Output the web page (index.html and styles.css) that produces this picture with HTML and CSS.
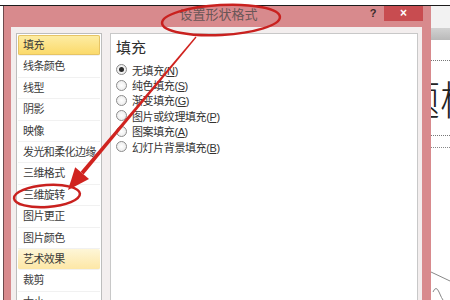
FILE: index.html
```html
<!DOCTYPE html>
<html lang="zh-CN">
<head>
    <meta charset="UTF-8">
    <meta name="viewport" content="width=device-width, initial-scale=1.0">
    <link rel="stylesheet" href="styles.css">
</head>
<body>
    <div class="screen-edge"></div>
    <div class="desk">
        <div class="dialog">
            <div class="titlebar">
                <span class="title">设置形状格式</span>
                <span class="help">?</span>
                <span class="close">×</span>
            </div>
            <div class="dialog-body">
                <ul class="nav">
                    <li class="selected">填充</li>
                    <li>线条颜色</li>
                    <li>线型</li>
                    <li>阴影</li>
                    <li>映像</li>
                    <li>发光和柔化边缘</li>
                    <li>三维格式</li>
                    <li>三维旋转</li>
                    <li>图片更正</li>
                    <li>图片颜色</li>
                    <li class="hover">艺术效果</li>
                    <li>裁剪</li>
                    <li>大小</li>
                </ul>
                <div class="pane">
                    <h2>填充</h2>
                    <label class="option"><span class="radio checked"></span><span>无填充(<u>N</u>)</span></label>
                    <label class="option"><span class="radio"></span><span>纯色填充(<u>S</u>)</span></label>
                    <label class="option"><span class="radio"></span><span>渐变填充(<u>G</u>)</span></label>
                    <label class="option"><span class="radio"></span><span>图片或纹理填充(<u>P</u>)</span></label>
                    <label class="option"><span class="radio"></span><span>图案填充(<u>A</u>)</span></label>
                    <label class="option"><span class="radio"></span><span>幻灯片背景填充(<u>B</u>)</span></label>
                </div>
            </div>
        </div>
        <div class="slide">
            <div class="ribbon"></div>
            <div class="ruler"></div>
            <div class="placeholder"><span>标题样式</span></div>
            <div class="placeholder-edge"></div>
        </div>
    </div>

    <!-- red pen marks drawn over the screenshot -->
    <svg class="marks" width="450" height="300" viewBox="0 0 450 300">
        <ellipse cx="221" cy="20" rx="59" ry="15" transform="rotate(-3 221 20)" fill="none" stroke="#c9211f" stroke-width="2.5"/>
        <ellipse cx="47" cy="196" rx="33" ry="11" transform="rotate(-4 47 196)" fill="none" stroke="#c9211f" stroke-width="2.5"/>
        <polygon points="196.5,37.4 83.6,174.4 80.6,171.8 195.5,36.6" fill="#d0231f"/>
        <polygon points="68,190 89,178.9 75.2,167.3" fill="#d0231f"/>
        <path d="M431 272 L450 281" stroke="#888" stroke-width="1" fill="none"/>
        <path d="M433 292 q3 -7 6 0 t4 8" stroke="#888" stroke-width="1" fill="none"/>
    </svg>
</body>
</html>
```

FILE: styles.css
```css
body {
    margin: 0;
    padding: 0;
    background-color: #fff;
    font-family: "Liberation Sans", "Noto Sans CJK SC", sans-serif;
    color: #333;
    overflow: hidden;
}

.screen-edge {
    height: 5px;
    border-bottom: 1px solid #1c1c1c;
}

.desk {
    display: flex;
    height: 294px;
    padding-left: 3px;
    overflow: hidden;
}

.dialog {
    width: 428px;
    box-sizing: border-box;
    border-left: 1px solid #6e4a4c;
    background-color: #d88a8d;
    display: flex;
    flex-direction: column;
}

.titlebar {
    height: 21px;
    display: flex;
    align-items: flex-start;
    flex-shrink: 0;
}

.title {
    flex: 1;
    padding-left: 66px;
    text-align: center;
    font-size: 13px;
    line-height: 18px;
    color: #6a5657;
}

.help {
    width: 12px;
    margin-right: 5px;
    font-size: 11px;
    font-weight: bold;
    line-height: 15px;
    color: #3a2a2a;
    text-align: center;
}

.close {
    width: 39px;
    height: 15px;
    margin-right: 8px;
    background-color: #c84c50;
    color: #fff;
    font-size: 12px;
    font-weight: bold;
    line-height: 15px;
    text-align: center;
}

.dialog-body {
    flex: 1;
    margin: 0 9px 0 7px;
    padding: 6px 4px 0 5px;
    background-color: #f3eeee;
    display: flex;
    gap: 8px;
}

.nav {
    width: 86px;
    box-sizing: border-box;
    margin: 0;
    padding: 1px;
    list-style: none;
    background-color: #fff;
    border: 1px solid #bdbdbd;
}

.nav li {
    height: 20.4px;
    line-height: 20.4px;
    padding-left: 5px;
    font-size: 11px;
    letter-spacing: -0.6px;
    color: #3a3a3a;
    border-bottom: 1px solid #f1f1f1;
    white-space: nowrap;
    overflow: hidden;
}

.nav li.selected {
    background: linear-gradient(#fdeda6, #fbd968);
    box-shadow: inset 0 0 0 1px #e6c465;
    border-radius: 2px;
}

.nav li.hover {
    background: linear-gradient(#fef6d8, #fde7a6);
    border-radius: 2px;
}

.pane {
    flex: 1;
    background-color: #fff;
    border: 1px solid #c8c8c8;
    padding: 5px 5px;
}

.pane h2 {
    margin: 0 0 6px;
    font-size: 15px;
    font-weight: normal;
    line-height: 17px;
    color: #2e2e2e;
}

.option {
    display: flex;
    align-items: center;
    gap: 5px;
    height: 15.4px;
    font-size: 11px;
    letter-spacing: -0.4px;
    color: #333;
    white-space: nowrap;
}

.radio {
    width: 11px;
    height: 11px;
    box-sizing: border-box;
    border: 1px solid #8c8c8c;
    border-radius: 50%;
    background: radial-gradient(#fff, #e6e6e6);
    display: flex;
    align-items: center;
    justify-content: center;
}

.radio.checked::after {
    content: "";
    width: 5px;
    height: 5px;
    border-radius: 50%;
    background-color: #2a2a2a;
}

.slide {
    flex: 1;
    overflow: hidden;
    background-color: #fff;
}

.ribbon {
    height: 22px;
    background-color: #f2f2f2;
}

.ruler {
    height: 12px;
    background: linear-gradient(#d2d2d2, #b9b9b9);
}

.placeholder {
    margin-top: 20px;
    height: 74px;
    border-top: 1px dotted #777;
    border-bottom: 1px dotted #777;
    white-space: nowrap;
}

.placeholder span {
    display: block;
    margin-left: -71px;
    font-family: "Noto Sans CJK SC", sans-serif;
    font-size: 40px;
    line-height: 74px;
    font-weight: 300;
    color: #222;
}

.placeholder-edge {
    margin-top: 11px;
    border-top: 1px dotted #888;
}

.marks {
    position: absolute;
    top: 0;
    left: 0;
    pointer-events: none;
}
```
